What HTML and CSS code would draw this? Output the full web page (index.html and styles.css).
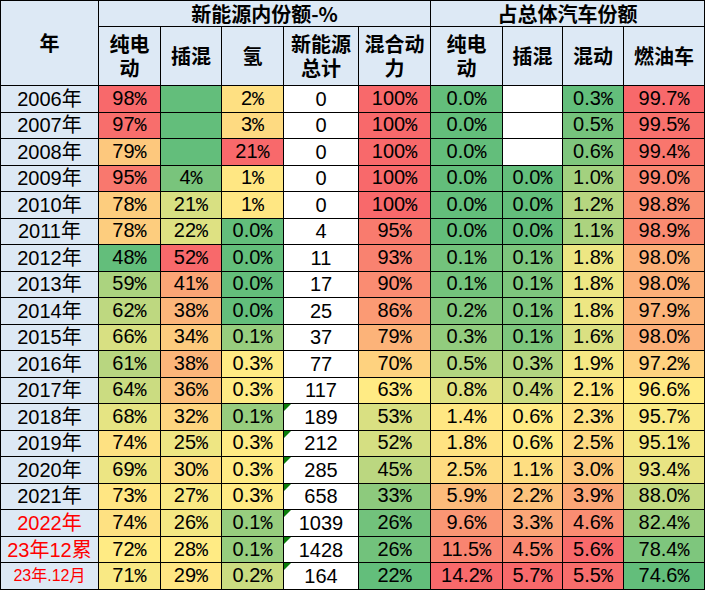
FILE: index.html
```html
<!DOCTYPE html>
<html lang="zh-CN">
<head>
<meta charset="utf-8">
<title>新能源份额</title>
<link rel="stylesheet" href="styles.css">
</head>
<body>
<table class="sheet">
  <colgroup>
    <col class="w98"><col class="w62"><col class="w61"><col class="w62"><col class="w75">
    <col class="w72"><col class="w72"><col class="w60"><col class="w61"><col class="w81">
  </colgroup>
  <thead>
    <tr class="hr1">
      <th class="hd" rowspan="2">年</th>
      <th class="hd" colspan="5">新能源内份额-%</th>
      <th class="hd" colspan="4">占总体汽车份额</th>
    </tr>
    <tr class="hr2">
      <th class="hd">纯电<br>动</th>
      <th class="hd">插混</th>
      <th class="hd">氢</th>
      <th class="hd">新能源<br>总计</th>
      <th class="hd">混合动<br>力</th>
      <th class="hd">纯电<br>动</th>
      <th class="hd">插混</th>
      <th class="hd">混动</th>
      <th class="hd">燃油车</th>
    </tr>
  </thead>
  <tbody>
    <tr><th class="yr">2006年</th><td>98<span class="p">%</span></td><td data-v="0"></td><td>2<span class="p">%</span></td><td>0</td><td>100<span class="p">%</span></td><td>0.0<span class="p">%</span></td><td></td><td>0.3<span class="p">%</span></td><td>99.7<span class="p">%</span></td></tr>
    <tr><th class="yr">2007年</th><td>97<span class="p">%</span></td><td data-v="0"></td><td>3<span class="p">%</span></td><td>0</td><td>100<span class="p">%</span></td><td>0.0<span class="p">%</span></td><td></td><td>0.5<span class="p">%</span></td><td>99.5<span class="p">%</span></td></tr>
    <tr><th class="yr">2008年</th><td>79<span class="p">%</span></td><td data-v="0"></td><td>21<span class="p">%</span></td><td>0</td><td>100<span class="p">%</span></td><td>0.0<span class="p">%</span></td><td></td><td>0.6<span class="p">%</span></td><td>99.4<span class="p">%</span></td></tr>
    <tr><th class="yr">2009年</th><td>95<span class="p">%</span></td><td>4<span class="p">%</span></td><td>1<span class="p">%</span></td><td>0</td><td>100<span class="p">%</span></td><td>0.0<span class="p">%</span></td><td>0.0<span class="p">%</span></td><td>1.0<span class="p">%</span></td><td>99.0<span class="p">%</span></td></tr>
    <tr><th class="yr">2010年</th><td>78<span class="p">%</span></td><td>21<span class="p">%</span></td><td>1<span class="p">%</span></td><td>0</td><td>100<span class="p">%</span></td><td>0.0<span class="p">%</span></td><td>0.0<span class="p">%</span></td><td>1.2<span class="p">%</span></td><td>98.8<span class="p">%</span></td></tr>
    <tr><th class="yr">2011年</th><td>78<span class="p">%</span></td><td>22<span class="p">%</span></td><td>0.0<span class="p">%</span></td><td>4</td><td>95<span class="p">%</span></td><td>0.0<span class="p">%</span></td><td>0.0<span class="p">%</span></td><td>1.1<span class="p">%</span></td><td>98.9<span class="p">%</span></td></tr>
    <tr><th class="yr">2012年</th><td>48<span class="p">%</span></td><td>52<span class="p">%</span></td><td>0.0<span class="p">%</span></td><td>11</td><td>93<span class="p">%</span></td><td>0.1<span class="p">%</span></td><td>0.1<span class="p">%</span></td><td>1.8<span class="p">%</span></td><td>98.0<span class="p">%</span></td></tr>
    <tr><th class="yr">2013年</th><td>59<span class="p">%</span></td><td>41<span class="p">%</span></td><td>0.0<span class="p">%</span></td><td>17</td><td>90<span class="p">%</span></td><td>0.1<span class="p">%</span></td><td>0.1<span class="p">%</span></td><td>1.8<span class="p">%</span></td><td>98.0<span class="p">%</span></td></tr>
    <tr><th class="yr">2014年</th><td>62<span class="p">%</span></td><td>38<span class="p">%</span></td><td>0.0<span class="p">%</span></td><td>25</td><td>86<span class="p">%</span></td><td>0.2<span class="p">%</span></td><td>0.1<span class="p">%</span></td><td>1.8<span class="p">%</span></td><td>97.9<span class="p">%</span></td></tr>
    <tr><th class="yr">2015年</th><td>66<span class="p">%</span></td><td>34<span class="p">%</span></td><td>0.1<span class="p">%</span></td><td>37</td><td>79<span class="p">%</span></td><td>0.3<span class="p">%</span></td><td>0.1<span class="p">%</span></td><td>1.6<span class="p">%</span></td><td>98.0<span class="p">%</span></td></tr>
    <tr><th class="yr">2016年</th><td>61<span class="p">%</span></td><td>38<span class="p">%</span></td><td>0.3<span class="p">%</span></td><td>77</td><td>70<span class="p">%</span></td><td>0.5<span class="p">%</span></td><td>0.3<span class="p">%</span></td><td>1.9<span class="p">%</span></td><td>97.2<span class="p">%</span></td></tr>
    <tr><th class="yr">2017年</th><td>64<span class="p">%</span></td><td>36<span class="p">%</span></td><td>0.3<span class="p">%</span></td><td>117</td><td>63<span class="p">%</span></td><td>0.8<span class="p">%</span></td><td>0.4<span class="p">%</span></td><td>2.1<span class="p">%</span></td><td>96.6<span class="p">%</span></td></tr>
    <tr><th class="yr">2018年</th><td>68<span class="p">%</span></td><td>32<span class="p">%</span></td><td>0.1<span class="p">%</span></td><td class="flag">189</td><td>53<span class="p">%</span></td><td>1.4<span class="p">%</span></td><td>0.6<span class="p">%</span></td><td>2.3<span class="p">%</span></td><td>95.7<span class="p">%</span></td></tr>
    <tr><th class="yr">2019年</th><td>74<span class="p">%</span></td><td>25<span class="p">%</span></td><td>0.3<span class="p">%</span></td><td class="flag">212</td><td>52<span class="p">%</span></td><td>1.8<span class="p">%</span></td><td>0.6<span class="p">%</span></td><td>2.5<span class="p">%</span></td><td>95.1<span class="p">%</span></td></tr>
    <tr><th class="yr">2020年</th><td>69<span class="p">%</span></td><td>30<span class="p">%</span></td><td>0.3<span class="p">%</span></td><td class="flag">285</td><td>45<span class="p">%</span></td><td>2.5<span class="p">%</span></td><td>1.1<span class="p">%</span></td><td>3.0<span class="p">%</span></td><td>93.4<span class="p">%</span></td></tr>
    <tr><th class="yr">2021年</th><td>73<span class="p">%</span></td><td>27<span class="p">%</span></td><td>0.3<span class="p">%</span></td><td class="flag">658</td><td>33<span class="p">%</span></td><td>5.9<span class="p">%</span></td><td>2.2<span class="p">%</span></td><td>3.9<span class="p">%</span></td><td>88.0<span class="p">%</span></td></tr>
    <tr><th class="yr red">2022年</th><td>74<span class="p">%</span></td><td>26<span class="p">%</span></td><td>0.1<span class="p">%</span></td><td class="flag">1039</td><td>26<span class="p">%</span></td><td>9.6<span class="p">%</span></td><td>3.3<span class="p">%</span></td><td>4.6<span class="p">%</span></td><td>82.4<span class="p">%</span></td></tr>
    <tr><th class="yr red">23年12累</th><td>72<span class="p">%</span></td><td>28<span class="p">%</span></td><td>0.1<span class="p">%</span></td><td class="flag">1428</td><td>26<span class="p">%</span></td><td>11.5<span class="p">%</span></td><td>4.5<span class="p">%</span></td><td>5.6<span class="p">%</span></td><td>78.4<span class="p">%</span></td></tr>
    <tr><th class="yr red small">23年.12月</th><td>71<span class="p">%</span></td><td>29<span class="p">%</span></td><td>0.2<span class="p">%</span></td><td class="flag">164</td><td>22<span class="p">%</span></td><td>14.2<span class="p">%</span></td><td>5.7<span class="p">%</span></td><td>5.5<span class="p">%</span></td><td>74.6<span class="p">%</span></td></tr>
  </tbody>
</table>
<script src="script.js"></script>
</body>
</html>
```
FILE: styles.css
```css
* { box-sizing: border-box; }
html, body { margin: 0; padding: 0; background: #ffffff; }

.sheet {
  border-collapse: collapse;
  table-layout: fixed;
  width: 705px;
  font-family: "Liberation Sans", "Noto Sans CJK SC", sans-serif;
  font-size: 20px;
  color: #000000;
}
.w98 { width: 98px; }
.w62 { width: 62px; }
.w61 { width: 61px; }
.w75 { width: 75px; }
.w72 { width: 72px; }
.w60 { width: 60px; }
.w81 { width: 81px; }

.sheet th,
.sheet td {
  border: 1px solid #000000;
  padding: 0;
  text-align: center;
  vertical-align: middle;
  white-space: nowrap;
  line-height: 22px;
  font-weight: 400;
  background: #ffffff;
}

.sheet .hd {
  background: #dde9f5;
  font-family: "Noto Sans CJK SC", sans-serif;
  font-weight: 700;
  line-height: 24px;
}
.hr1 { height: 26px; }
.hr2 { height: 59px; }
.sheet tbody tr { height: 26.53px; }

.sheet .yr { background: #dde9f5; }
.sheet .red { color: #ff0000; }
.sheet .small { font-size: 16px; }

.p { font-family: "Liberation Mono", monospace; }

.flag { position: relative; }
.flag::before {
  content: "";
  position: absolute;
  left: 0;
  top: 0;
  border-top: 7px solid #0a7d0a;
  border-right: 7px solid transparent;
}
```
FILE: script.js
```js
(function () {
  var G = [99, 190, 123], Y = [255, 235, 132], R = [248, 105, 107];
  var mids = { 1: 72, 2: 28, 3: 0.3, 5: 63, 6: 1.0, 7: 0.6, 8: 2.0, 9: 96.6 };
  var rows = Array.prototype.slice.call(document.querySelectorAll('.sheet tbody tr'));
  Object.keys(mids).forEach(function (k) {
    var ci = +k, mid = mids[k];
    var cells = rows.map(function (r) { return r.cells[ci]; }).filter(function (c) {
      return c.hasAttribute('data-v') || c.textContent.trim() !== '';
    });
    var vals = cells.map(function (c) {
      return parseFloat(c.hasAttribute('data-v') ? c.getAttribute('data-v') : c.textContent);
    });
    var mn = Math.min.apply(null, vals), mx = Math.max.apply(null, vals);
    cells.forEach(function (c, i) {
      var v = vals[i], a, b, t;
      if (v <= mid) { a = G; b = Y; t = mid === mn ? 1 : (v - mn) / (mid - mn); }
      else { a = Y; b = R; t = mx === mid ? 0 : (v - mid) / (mx - mid); }
      var col = a.map(function (x, j) { return Math.round(x + (b[j] - x) * t); });
      c.style.backgroundColor = 'rgb(' + col.join(',') + ')';
    });
  });
})();
```
